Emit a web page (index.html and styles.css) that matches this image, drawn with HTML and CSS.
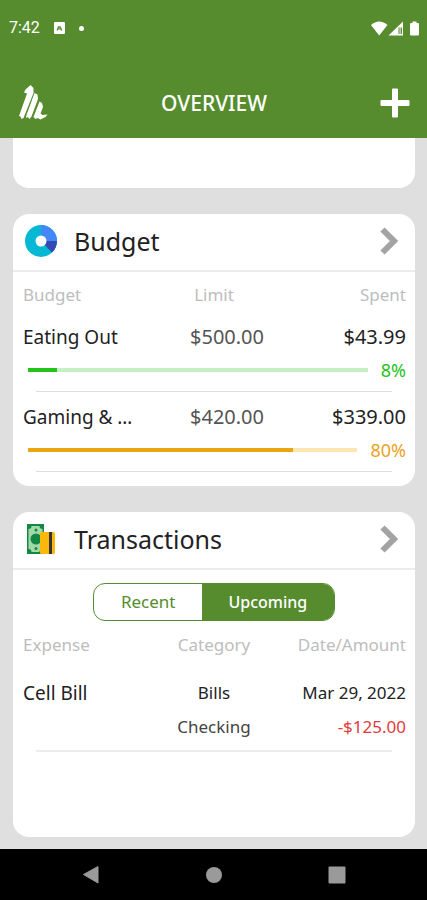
FILE: index.html
```html
<!DOCTYPE html>
<html lang="en">
<head>
<meta charset="utf-8">
<meta name="viewport" content="width=device-width, initial-scale=1">
<title>Overview</title>
<link rel="stylesheet" href="styles.css">
</head>
<body>
<div class="status">
  <span class="clock">7:42</span>
  <svg class="status-app" width="11" height="12" viewBox="0 0 11 12" aria-hidden="true"><rect width="11" height="12" rx="1" fill="#fff"/><path d="M2.5 8.5 4 4.2h2.5L8.5 8.5H7L6.6 7.4H4.2l-.5 1.1Z" fill="#568c2e"/><path d="M5.2 5.2 4.8 6.4h1.1Z" fill="#fff"/></svg>
  <span class="dot"></span>
  <svg class="status-system" width="49" height="15" viewBox="0 0 49 15" aria-hidden="true"><path d="M0 4C5-.7 11.500-.7 16.500 4L8.200 14.500Z" fill="#fff"/><path d="M17.500 14.500 32 .5v14Z" fill="#fff"/><path d="M27.500 6.500h3.500v6.500h-3.500Z" fill="#568c2e"/><path d="M28.600 6.500h1v6.500h-1Z" fill="#fff"/><path d="M39 3q0-1 1-1h1.500V.5h4V2H47q1 0 1 1v10.500q0 1-1 1h-7q-1 0-1-1Z" fill="#fff"/></svg>
</div>
<header class="appbar">
  <a class="logo" href="#" aria-label="Home"><svg width="30" height="36" viewBox="0 0 30 36" fill="#fff" aria-hidden="true"><path d="M12.500 0 15.500 3 15.500 8 5.500 33 3.500 34 2.500 31.500 1 31 9 8.500 6 7.500 7.500 4.500Z"/><path d="M16.500 8 19.500 9.500 20 14 13.500 31.500 11.500 34 10 32 8 33 8.500 30Z"/><path d="M21.500 16.500 24 18 25 22 22.500 28.500 24.500 30 29.500 29.500 27.500 32 22.500 34.500 19.500 33 17.500 34 15.500 32Z"/></svg></a>
  <h1>OVERVIEW</h1>
  <button class="add" type="button" aria-label="Add"><svg width="30" height="30" viewBox="0 0 30 30" aria-hidden="true"><path d="M12 1.500q0-1 1-1h4q1 0 1 1V12h10.500q1 0 1 1v4q0 1-1 1H18v10.500q0 1-1 1h-4q-1 0-1-1V18H1.500q-1 0-1-1v-4q0-1 1-1H12Z" fill="#fff"/></svg></button>
</header>
<main>
  <section class="card card-cut" aria-label="Accounts"></section>

  <section class="card">
    <a class="card-head" href="#">
      <svg class="card-icon" width="32" height="32" viewBox="0 0 32 32" aria-hidden="true"><circle cx="16" cy="16" r="16" fill="#05b8d3"/><path d="M16 16V0A16 16 0 0 1 32 16Z" fill="#4487f8"/><path d="M16 16H32A16 16 0 0 1 27 27.600Z" fill="#3349b5"/><circle cx="16" cy="16" r="5.500" fill="#fff"/></svg>
      <h2>Budget</h2>
      <svg class="chevron" width="18" height="28" viewBox="0 0 18 28" aria-hidden="true"><path d="M2.500 2.500 14 14 2.500 25.500" fill="none" stroke="#a3a3a3" stroke-width="6"/></svg>
    </a>
    <table class="budget">
      <thead><tr><th>Budget</th><th>Limit</th><th>Spent</th></tr></thead>
      <tbody>
        <tr class="entry"><td class="name">Eating Out</td><td class="limit">$500.00</td><td>$43.99</td></tr>
        <tr class="usage"><td colspan="3"><div class="meter green"><div class="track"><div class="fill" style="width:8.5%"></div></div><span>8%</span></div></td></tr>
        <tr class="entry"><td class="name">Gaming &amp; …</td><td class="limit">$420.00</td><td>$339.00</td></tr>
        <tr class="usage"><td colspan="3"><div class="meter amber"><div class="track"><div class="fill" style="width:80.500%"></div></div><span>80%</span></div></td></tr>
      </tbody>
    </table>
  </section>

  <section class="card">
    <a class="card-head" href="#">
      <svg class="card-icon" width="32" height="32" viewBox="0 0 32 32" aria-hidden="true"><path d="M2 1h17v30H2Z" fill="#138846"/><path d="M6.500 3h8a3 3 0 0 0 3 3v20a3 3 0 0 0-3 3h-8a3 3 0 0 0-3-3V6a3 3 0 0 0 3-3Z" fill="#a2d9a7"/><circle cx="11" cy="16" r="5.500" fill="#138846"/><circle cx="11" cy="7" r="1.500" fill="#138846"/><circle cx="11" cy="25.500" r="1.500" fill="#138846"/><rect x="15" y="9" width="15" height="22" rx="1.500" fill="#fbb80c"/><path d="M24 9h3v22h-3Z" fill="#353535"/></svg>
      <h2>Transactions</h2>
      <svg class="chevron" width="18" height="28" viewBox="0 0 18 28" aria-hidden="true"><path d="M2.500 2.500 14 14 2.500 25.500" fill="none" stroke="#a3a3a3" stroke-width="6"/></svg>
    </a>
    <div class="segments">
      <button type="button" aria-pressed="false">Recent</button>
      <button type="button" aria-pressed="true">Upcoming</button>
    </div>
    <table class="transactions">
      <thead><tr><th>Expense</th><th>Category</th><th>Date/Amount</th></tr></thead>
      <tbody>
        <tr><td class="name">Cell Bill</td><td>Bills</td><td>Mar 29, 2022</td></tr>
        <tr class="detail"><td></td><td>Checking</td><td class="debit">-$125.00</td></tr>
        <tr class="rule"><td colspan="3"><div></div></td></tr>
      </tbody>
    </table>
  </section>
</main>
<nav class="system-nav" aria-label="System">
  <button type="button" aria-label="Back"><svg width="18" height="20" viewBox="0 0 18 20" aria-hidden="true"><path d="M1.500 9.500 16 1.500v16.500Z" fill="#9a9a9a" stroke="#9a9a9a" stroke-linejoin="round"/></svg></button>
  <button type="button" aria-label="Home"><svg width="18" height="18" viewBox="0 0 18 18" aria-hidden="true"><circle cx="9" cy="9" r="8" fill="#9a9a9a"/></svg></button>
  <button type="button" aria-label="Recent apps"><svg width="18" height="18" viewBox="0 0 18 18" aria-hidden="true"><rect x=".5" y=".5" width="17" height="17" rx="1" fill="#9a9a9a"/></svg></button>
</nav>
</body>
</html>
```
FILE: styles.css
```css
*, *::after { box-sizing: border-box; }

body {
  margin: 0;
  min-height: 100vh;
  display: flex;
  flex-direction: column;
  background: #dfdfdf;
  color: #222;
  font-family: "Noto Sans", "Open Sans", sans-serif;
}

button {
  margin: 0;
  padding: 0;
  border: 0;
  background: none;
  font: inherit;
}

a { color: inherit; text-decoration: none; }
svg { display: block; }

.status {
  display: flex;
  align-items: center;
  height: 56px;
  padding: 0 7px 0 9px;
  background: #568c2e;
  color: #fff;
}

.clock {
  font: 400 16px/20px Roboto, sans-serif;
}

.status-app { margin-left: 14px; }

.dot {
  width: 5px;
  height: 5px;
  margin-left: 14px;
  border-radius: 50%;
  background: #fff;
}

.status-system { margin-left: auto; }

.appbar {
  display: grid;
  grid-template-columns: 1fr auto 1fr;
  align-items: center;
  height: 82px;
  padding: 12px 17px 0 18px;
  background: #568c2e;
  color: #fff;
}

.appbar h1 {
  margin: 0;
  font-size: 21px;
  line-height: 28px;
  font-weight: 500;
}

.logo { justify-self: start; }
.add { justify-self: end; }

main {
  flex: 1;
  display: flex;
  flex-direction: column;
  gap: 26px;
  padding: 0 12px 12px 13px;
}

.card {
  border-radius: 16px;
  background: #fff;
}

.card-cut {
  height: 50px;
  border-radius: 0 0 16px 16px;
}

.card:last-child { flex: 1; }

.card-head {
  display: flex;
  align-items: center;
  height: 58px;
  padding: 0 17px 2px 12px;
  border-bottom: 2px solid #ececec;
}

.card-head h2 {
  margin: 0 0 0 17px;
  font-size: 25px;
  line-height: 32px;
  font-weight: 400;
}

.chevron { margin-left: auto; }

table {
  width: 100%;
  table-layout: fixed;
  border-collapse: collapse;
}

th, td {
  padding: 0;
  text-align: center;
  white-space: nowrap;
}

th {
  height: 40px;
  color: #bdbdbd;
  font-size: 17px;
  line-height: 24px;
  font-weight: 400;
}

th:first-child, td:first-child { padding-left: 10px; text-align: left; }
th:last-child, td:last-child { padding-right: 9px; text-align: right; }

.name {
  color: #222;
  font-size: 19px;
  line-height: 24px;
}

.budget { margin-bottom: 14px; }
.budget th { padding-top: 6px; }

.entry td {
  height: 44px;
  padding-top: 6px;
}

.entry td:not(.name) {
  font-size: 20px;
  line-height: 24px;
}

.entry .limit { padding-left: 26px; color: #555; }

.usage td { height: 36px; }

.meter {
  display: flex;
  align-items: center;
  gap: 13px;
  height: 28px;
  padding-left: 5px;
  font-size: 18px;
  line-height: 24px;
}

.track {
  flex: 1;
  height: 4px;
}

.fill { height: 100%; }

.green { color: #21c321; }
.green .track { background: #c5f1c2; }
.green .fill { background: #22c41a; }
.amber { color: #eba31e; }
.amber .track { background: #fde5b4; }
.amber .fill { background: #eaa611; }

.usage td::after {
  content: "";
  display: block;
  height: 8px;
  margin: 0 14px 0 13px;
  border-bottom: 1px solid #dedede;
}

.segments {
  display: grid;
  grid-template-columns: 9fr 11fr;
  width: 60%;
  height: 38px;
  margin: 13px auto 4px;
  border: 1px solid #568c2e;
  border-radius: 12px;
  overflow: hidden;
}

.segments button {
  color: #568c2e;
  font-size: 17px;
  line-height: 24px;
}

.segments button[aria-pressed="true"] {
  background: #568c2e;
  color: #fff;
  font-size: 16px;
  font-weight: 500;
}

.transactions td {
  height: 34px;
  font-size: 17px;
  line-height: 24px;
}

.transactions td.name { font-size: 19px; }
.transactions tbody tr:first-child td { height: 45px; padding-top: 11px; }
.transactions .detail td { color: #444; }
.transactions .detail .debit { color: #e23b3b; }
.transactions .rule td { height: 8px; line-height: 8px; }

.rule div {
  height: 8px;
  margin: 0 14px 0 13px;
  border-bottom: 2px solid #ececec;
}

.system-nav {
  display: grid;
  grid-template-columns: repeat(3, 123px);
  justify-content: center;
  height: 51px;
  background: #000;
}

.system-nav button {
  display: grid;
  place-items: center;
}
```
